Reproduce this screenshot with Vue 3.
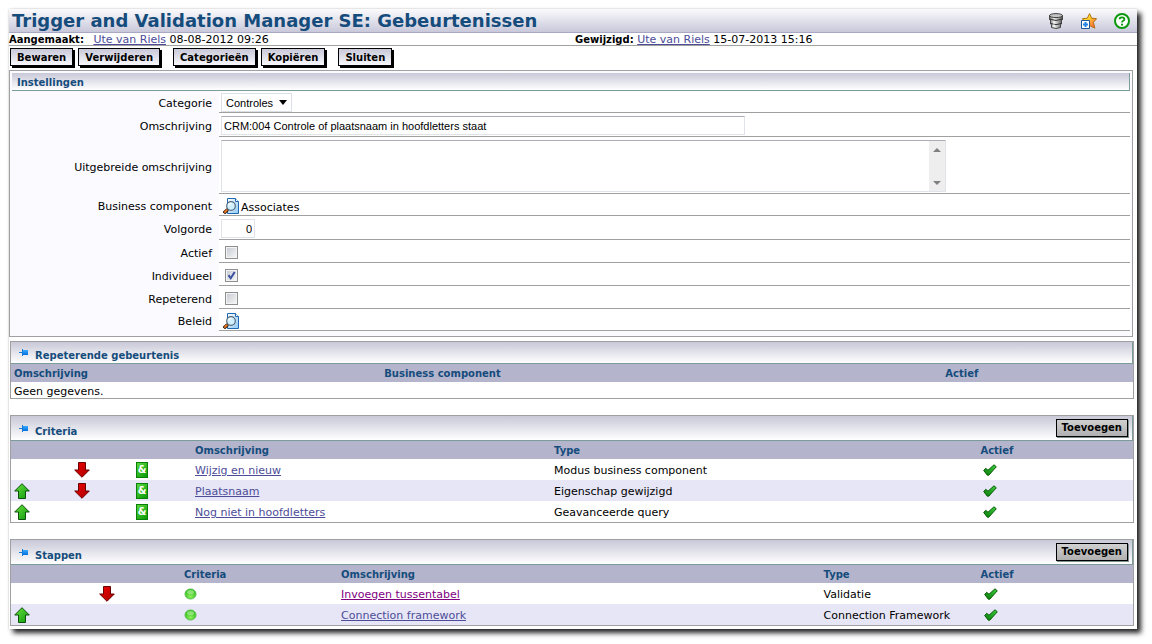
<script setup>
import { ref } from 'vue'

const category = ref('Controles')
const description = ref('CRM:004 Controle of plaatsnaam in hoofdletters staat')
const longDescription = ref('')
const order = ref('0')
const active = ref(false)
const individual = ref(true)
const repeating = ref(false)

const criteria = [
  { up: false, down: true, name: 'Wijzig en nieuw', type: 'Modus business component' },
  { up: true, down: true, name: 'Plaatsnaam', type: 'Eigenschap gewijzigd' },
  { up: true, down: false, name: 'Nog niet in hoofdletters', type: 'Geavanceerde query' },
]

const steps = [
  { up: false, down: true, name: 'Invoegen tussentabel', type: 'Validatie', visited: true },
  { up: true, down: false, name: 'Connection framework', type: 'Connection Framework', visited: false },
]
</script>

<template>
  <svg class="defs" width="0" height="0" aria-hidden="true">
    <defs>
      <linearGradient id="g-green" x1="0" y1="0" x2="1" y2="1">
        <stop offset="0" stop-color="#6be03f" />
        <stop offset="1" stop-color="#0c9a0c" />
      </linearGradient>
      <linearGradient id="g-tick" x1="0" y1="1" x2="1" y2="0">
        <stop offset="0" stop-color="#087808" />
        <stop offset="1" stop-color="#3fd03f" />
      </linearGradient>
      <linearGradient id="g-red" x1="0" y1="0" x2="1" y2="1">
        <stop offset="0" stop-color="#f00000" />
        <stop offset="1" stop-color="#a80000" />
      </linearGradient>
      <linearGradient id="g-doc" x1="0" y1="0" x2="1" y2="1">
        <stop offset="0" stop-color="#ffffff" />
        <stop offset="1" stop-color="#8fc8f4" />
      </linearGradient>
      <linearGradient id="g-metal" x1="0" y1="0" x2="1" y2="0">
        <stop offset="0" stop-color="#6a6a6a" />
        <stop offset="0.35" stop-color="#f2f2f2" />
        <stop offset="0.65" stop-color="#b0b0b0" />
        <stop offset="1" stop-color="#4c4c4c" />
      </linearGradient>
      <linearGradient id="g-star" x1="0" y1="0" x2="1" y2="1">
        <stop offset="0.3" stop-color="#ffe428" />
        <stop offset="0.8" stop-color="#ff7040" />
      </linearGradient>
      <linearGradient id="g-pin" x1="0" y1="0" x2="0" y2="1">
        <stop offset="0" stop-color="#38aaff" />
        <stop offset="1" stop-color="#0070dc" />
      </linearGradient>
      <radialGradient id="g-ball" cx="0.5" cy="0.75" r="0.7">
        <stop offset="0" stop-color="#8cf05c" />
        <stop offset="1" stop-color="#2cb81c" />
      </radialGradient>
      <symbol id="i-up" viewBox="0 0 16 16">
        <path d="M8 .7 15.3 8H11.5v7.5h-7V8H.7z" fill="url(#g-green)" stroke="#0a520a" />
      </symbol>
      <symbol id="i-down" viewBox="0 0 16 16">
        <path d="M8 15.3 .7 8H4.5V.5h7V8h3.8z" fill="url(#g-red)" stroke="#6a0000" />
      </symbol>
      <symbol id="i-tick" viewBox="0 0 14 12">
        <path d="M.7 6.500 2.700 4.300 5 6.200 11 .8 13.300 2.800 5.800 11.200H4.300z" fill="url(#g-tick)" stroke="#075c07" />
      </symbol>
      <symbol id="i-pin" viewBox="0 0 10 8">
        <path d="M0 3h4v1H0z" fill="#2080d8" />
        <path d="M3 0h1v7H3z" fill="#1478d4" />
        <path d="M4 1h5v5H4z" fill="url(#g-pin)" />
      </symbol>
      <symbol id="i-search" viewBox="0 0 16 16">
        <path d="M4.500.5h8l3 3v12h-11z" fill="url(#g-doc)" stroke="#1f68b4" />
        <path d="M12.500.5v3h3" fill="#fff" stroke="#1f68b4" />
        <path d="M.8 15.200 4.800 11.400" stroke="#3a2418" stroke-width="3.400" />
        <path d="M1.300 14.600 4.300 11.700" stroke="#f07820" stroke-width="1.800" />
        <circle cx="8" cy="8" r="4.300" fill="#d0f0ff" stroke="#54687c" stroke-width="1.200" />
        <path d="M5.600 7.600Q6.200 5.400 8.600 5.400" fill="none" stroke="#fff" stroke-width="1.400" />
      </symbol>
    </defs>
  </svg>

  <main class="window">
    <header class="titlebar">
      <h1>Trigger and Validation Manager SE: Gebeurtenissen</h1>
      <nav class="tools">
        <button type="button" aria-label="Database">
          <svg width="16" height="16" viewBox="0 0 16 16">
            <path d="M1.500 2.500v4l1 .5v4l1 .5v3q4.500 2 9 0v-3l1-.5V7l1-.5v-4z" fill="url(#g-metal)" stroke="#484848" />
            <path d="M1.500 6.200q6.500 2.500 13 0M2.500 10.500q5.500 2.300 11 0" fill="none" stroke="#303030" />
            <ellipse cx="8" cy="2.600" rx="6.500" ry="2" fill="#c4c4c4" stroke="#404040" />
            <path d="M6 8v6" stroke="#fff" opacity=".7" />
          </svg>
        </button>
        <button type="button" aria-label="Favoriet toevoegen">
          <svg width="16" height="16" viewBox="0 0 16 16">
            <path d="M8.500.6 10.700 5.200 15.600 5.700 12.400 9.300 13.900 15.200 8.500 12.500 3.500 14.500 4.500 9.300 1.400 5.700 6.400 5.200z" fill="url(#g-star)" stroke="#b07010" />
            <path d="M.5 7.500h8v8h-8z" fill="#fff" stroke="#1c5898" />
            <path d="M4.500 9v5M2 11.500h5" stroke="#2484e8" stroke-width="2" />
          </svg>
        </button>
        <button type="button" aria-label="Help">
          <svg width="16" height="16" viewBox="0 0 16 16">
            <circle cx="8" cy="8" r="7" fill="#fff" stroke="#0c980c" stroke-width="2" />
            <path d="M5.600 6.300Q5.600 4.300 8 4.300T10.400 6.200Q10.400 7.400 8.900 8 8 8.400 8 9.600" fill="none" stroke="#0c980c" stroke-width="1.800" />
            <path d="M7 10.800h2v1.700H7z" fill="#0c980c" />
          </svg>
        </button>
      </nav>
    </header>

    <div class="meta">
      <p><b>Aangemaakt:</b> <a class="first" href="#">Ute van Riels</a> 08-08-2012 09:26</p>
      <p><b>Gewijzigd:</b> <a href="#">Ute van Riels</a> 15-07-2013 15:16</p>
    </div>

    <div class="actions">
      <div class="group">
        <button type="button">Bewaren</button>
        <button type="button">Verwijderen</button>
      </div>
      <div class="group">
        <button type="button">Categorieën</button>
        <button type="button">Kopiëren</button>
      </div>
      <div class="group">
        <button type="button">Sluiten</button>
      </div>
    </div>

    <form class="settings" @submit.prevent>
      <h2>Instellingen</h2>
      <div class="row h22">
        <label for="category">Categorie</label>
        <div class="value">
          <span class="select">
            <select id="category" v-model="category">
              <option>Controles</option>
            </select>
            <svg width="8" height="5" viewBox="0 0 8 5"><path d="M0 0h8L4 5z" /></svg>
          </span>
        </div>
      </div>
      <div class="row h24">
        <label for="description">Omschrijving</label>
        <div class="value"><input id="description" v-model="description" class="text wide" type="text" /></div>
      </div>
      <div class="row h57">
        <label for="long">Uitgebreide omschrijving</label>
        <div class="value">
          <div class="area">
            <textarea id="long" v-model="longDescription"></textarea>
            <div class="scroll" aria-hidden="true">
              <svg width="8" height="4" viewBox="0 0 8 4"><path d="M4 0 8 4H0z" fill="#808080" /></svg>
              <svg width="8" height="4" viewBox="0 0 8 4"><path d="M0 0h8L4 4z" fill="#808080" /></svg>
            </div>
          </div>
        </div>
      </div>
      <div class="row h22">
        <label for="component">Business component</label>
        <div class="value">
          <button id="component" class="lookup" type="button">
            <svg width="16" height="16"><use href="#i-search" /></svg>
            <span>Associates</span>
          </button>
        </div>
      </div>
      <div class="row h24">
        <label for="order">Volgorde</label>
        <div class="value"><input id="order" v-model="order" class="text small" type="text" /></div>
      </div>
      <div class="row h23">
        <label for="active">Actief</label>
        <div class="value"><input id="active" v-model="active" type="checkbox" /></div>
      </div>
      <div class="row h23">
        <label for="individual">Individueel</label>
        <div class="value">
          <span class="check">
            <input id="individual" v-model="individual" type="checkbox" />
            <svg v-if="individual" width="13" height="13" viewBox="0 0 13 13">
              <path d="M3.500 6.200 5.700 9.300 9.700 3" fill="none" stroke="#3c50a0" stroke-width="2" />
            </svg>
          </span>
        </div>
      </div>
      <div class="row h23">
        <label for="repeating">Repeterend</label>
        <div class="value"><input id="repeating" v-model="repeating" type="checkbox" /></div>
      </div>
      <div class="row h22">
        <label for="policy">Beleid</label>
        <div class="value">
          <button id="policy" class="lookup" type="button">
            <svg width="16" height="16"><use href="#i-search" /></svg>
          </button>
        </div>
      </div>
    </form>

    <section class="panel">
      <header class="low">
        <svg width="10" height="8"><use href="#i-pin" /></svg>
        <h2>Repeterende gebeurtenis</h2>
      </header>
      <table class="recurring">
        <thead>
          <tr><th>Omschrijving</th><th>Business component</th><th>Actief</th></tr>
        </thead>
        <tbody>
          <tr class="empty"><td colspan="3">Geen gegevens.</td></tr>
        </tbody>
      </table>
    </section>

    <section class="panel">
      <header>
        <svg width="10" height="8"><use href="#i-pin" /></svg>
        <h2>Criteria</h2>
        <button type="button">Toevoegen</button>
      </header>
      <table class="criteria">
        <thead>
          <tr><th></th><th></th><th></th><th>Omschrijving</th><th>Type</th><th>Actief</th></tr>
        </thead>
        <tbody>
          <tr v-for="item in criteria" :key="item.name">
            <td class="icon"><svg v-if="item.up" width="16" height="16"><use href="#i-up" /></svg></td>
            <td class="icon"><svg v-if="item.down" width="16" height="16"><use href="#i-down" /></svg></td>
            <td class="icon"><span class="and">&amp;</span></td>
            <td><a href="#">{{ item.name }}</a></td>
            <td>{{ item.type }}</td>
            <td class="icon tick"><svg width="14" height="12"><use href="#i-tick" /></svg></td>
          </tr>
        </tbody>
      </table>
    </section>

    <section class="panel">
      <header>
        <svg width="10" height="8"><use href="#i-pin" /></svg>
        <h2>Stappen</h2>
        <button type="button">Toevoegen</button>
      </header>
      <table class="steps">
        <thead>
          <tr><th></th><th></th><th>Criteria</th><th>Omschrijving</th><th>Type</th><th>Actief</th></tr>
        </thead>
        <tbody>
          <tr v-for="item in steps" :key="item.name">
            <td class="icon"><svg v-if="item.up" width="16" height="16"><use href="#i-up" /></svg></td>
            <td class="icon"><svg v-if="item.down" width="16" height="16"><use href="#i-down" /></svg></td>
            <td class="icon">
              <svg width="13" height="12" viewBox="0 0 13 12">
                <ellipse cx="6.500" cy="6" rx="5.500" ry="5" fill="url(#g-ball)" stroke="#58c048" />
                <ellipse cx="6.500" cy="4" rx="3.500" ry="2" fill="#b4f4a0" opacity=".6" />
              </svg>
            </td>
            <td><a href="#" :class="{ visited: item.visited }">{{ item.name }}</a></td>
            <td>{{ item.type }}</td>
            <td class="icon tick"><svg width="14" height="12"><use href="#i-tick" /></svg></td>
          </tr>
        </tbody>
      </table>
    </section>
  </main>
</template>

<style>
body {
  background: #fff;
}
</style>

<style scoped>
.defs {
  position: absolute;
}
.window {
  margin: 9px 15px 15px 9px;
  padding-bottom: 3px;
  background: #fff;
  box-shadow: 4px 4px 5px rgba(0, 0, 0, 0.85), 0 0 2px rgba(0, 0, 0, 0.2);
  font-family: Verdana, "DejaVu Sans", sans-serif;
  font-size: 11px;
  line-height: 13px;
  color: #000;
}
h1,
h2,
p {
  margin: 0;
}
h2 {
  font-size: 10px;
  line-height: 13px;
  color: #154c7c;
}
b,
th {
  font-size: 10px;
}
a {
  color: #4c4c98;
}
a.visited {
  color: #800080;
}
button {
  font: inherit;
  color: inherit;
}
svg {
  display: block;
  flex: none;
}
.titlebar {
  display: flex;
  align-items: center;
  justify-content: space-between;
  height: 23px;
  padding: 0 7px 0 3px;
  border-bottom: 1px solid #a8a8c4;
  background: linear-gradient(#fbfbfd, #c8c8da);
}
h1 {
  font-size: 18px;
  line-height: 23px;
  color: #154c7c;
}
.tools {
  display: flex;
  gap: 17px;
}
.tools button {
  padding: 0;
  border: 0;
  background: none;
}
.meta {
  display: grid;
  grid-template-columns: 1fr 1fr;
  gap: 4px;
  height: 12px;
  border-bottom: 1px solid #a0a0a0;
}
.meta .first {
  margin-left: 6px;
}
.actions {
  display: flex;
  gap: 13px;
  padding: 2px 1px 4px;
}
.group {
  display: flex;
  gap: 5px;
}
.actions button {
  height: 18px;
  padding: 0 6px;
  border: 1px solid #000;
  background: linear-gradient(#c8c8d8, #f8f8fc);
  box-shadow: 2px 2px 0 #000;
  font-size: 10px;
  font-weight: bold;
  line-height: 15px;
}
.settings {
  margin-right: 4px;
  padding: 2px 2px 5px;
  border: 1px solid #a0a0a0;
  background: #fafaff;
}
.settings h2 {
  padding: 3px 5px 1px;
  border: 1px solid #7c9c9c;
  border-width: 0 1px 1px 0;
  background: linear-gradient(#c8c8d8, #fff);
}
.row {
  display: grid;
  grid-template-columns: 207px 1fr;
}
.h22 {
  height: 22px;
}
.h23 {
  height: 23px;
}
.h24 {
  height: 24px;
}
.h57 {
  height: 57px;
}
.row > label {
  align-self: center;
  padding: 3px 7px 0 0;
  text-align: right;
}
.value {
  display: flex;
  align-items: center;
  padding: 2px 0 0 2px;
  border-bottom: 1px solid #a0a0a0;
  background: #fff;
}
.select {
  display: flex;
  align-items: center;
}
select {
  appearance: none;
  width: 71px;
  height: 19px;
  padding: 0 4px;
  border: 1px solid #dcdfe6;
  border-radius: 0;
  background: #fff;
  font: 11px "Liberation Sans", Arial, sans-serif;
  color: #000;
}
.select svg {
  margin-left: -13px;
  pointer-events: none;
}
.text {
  box-sizing: border-box;
  height: 19px;
  padding: 1px 2px;
  border: 1px solid #e0e3ea;
  border-top-color: #abadb3;
  background: #fff;
  font: 11px "Liberation Sans", Arial, sans-serif;
  color: #000;
}
.wide {
  width: 524px;
}
.small {
  width: 34px;
  border-top-color: #e0e3ea;
  text-align: right;
}
.area {
  display: flex;
  box-sizing: border-box;
  width: 725px;
  height: 52px;
  border: 1px solid #e0e3ea;
  border-top-color: #abadb3;
}
textarea {
  flex: 1;
  padding: 2px;
  border: 0;
  background: #fff;
  font: 11px "Liberation Sans", Arial, sans-serif;
  resize: none;
}
.scroll {
  display: flex;
  flex-direction: column;
  justify-content: space-between;
  align-items: center;
  width: 16px;
  padding: 7px 0 6px;
  box-sizing: border-box;
  background: #eee;
}
.lookup {
  display: flex;
  align-items: center;
  gap: 2px;
  padding: 0 2px;
  border: 0;
  background: none;
}
.lookup span {
  padding-top: 3px;
}
input[type='checkbox'] {
  appearance: none;
  box-sizing: border-box;
  width: 13px;
  height: 13px;
  margin: 0 4px;
  border: 1px solid #8e8f8f;
  background: linear-gradient(135deg, #c4c8d0, #f8f8f8);
  box-shadow: inset 0 0 0 1px #f4f4f4;
}
.check {
  display: grid;
}
.check > * {
  grid-area: 1 / 1;
}
.check svg {
  margin-left: 4px;
  pointer-events: none;
}
.panel {
  margin: 0 3px 16px 1px;
  border: 1px solid #a0a0a0;
}
.settings + .panel {
  margin-top: 4px;
}
.panel:last-child {
  margin-bottom: 0;
}
.panel header {
  display: flex;
  align-items: center;
  box-sizing: border-box;
  height: 25px;
  padding: 1px 4px 0 8px;
  border: 1px solid #7c9c9c;
  border-width: 0 1px 1px 0;
  background: linear-gradient(#c8c8d8, #fff);
}
.panel header.low {
  height: 22px;
}
.panel h2 {
  flex: 1;
  padding: 5px 0 0 6px;
}
.panel header button {
  height: 18px;
  margin-bottom: 2px;
  padding: 0 5px;
  border: 1px solid #000;
  background: linear-gradient(#d0d0d0, #b0b0b0);
  box-shadow: 1px 1px 0 #809090;
  font-size: 10px;
  font-weight: bold;
  line-height: 15px;
}
table {
  width: 100%;
  border-collapse: collapse;
  table-layout: fixed;
}
th,
td {
  box-sizing: border-box;
  height: 21px;
  padding: 2px 3px 0;
  text-align: left;
  white-space: nowrap;
}
th {
  height: 18px;
  padding-top: 0;
  background: #b4b4cc;
  color: #154c7c;
}
.icon {
  padding-top: 0;
}
tbody tr:nth-child(even) {
  background: #e6e6f6;
}
.empty td {
  height: 16px;
}
.recurring th:nth-child(1) {
  width: 33%;
}
.recurring th:nth-child(2) {
  width: 50%;
}
.criteria th:nth-child(1) {
  width: 60px;
}
.criteria th:nth-child(2) {
  width: 62px;
}
.criteria th:nth-child(3) {
  width: 59px;
}
.criteria th:nth-child(4) {
  width: 32%;
}
.criteria th:nth-child(5) {
  width: 38%;
}
.steps th:nth-child(1),
.steps th:nth-child(2) {
  width: 85px;
}
.steps th:nth-child(3),
.steps th:nth-child(5) {
  width: 14%;
}
.steps th:nth-child(4) {
  width: 43%;
}
.tick {
  padding-left: 6px;
}
.and {
  display: block;
  box-sizing: border-box;
  width: 12px;
  height: 16px;
  border: 1px solid #088008;
  background: linear-gradient(135deg, #5cd83c, #089808);
  color: #fff;
  font-size: 10px;
  font-weight: bold;
  line-height: 14px;
  text-align: center;
}
</style>
